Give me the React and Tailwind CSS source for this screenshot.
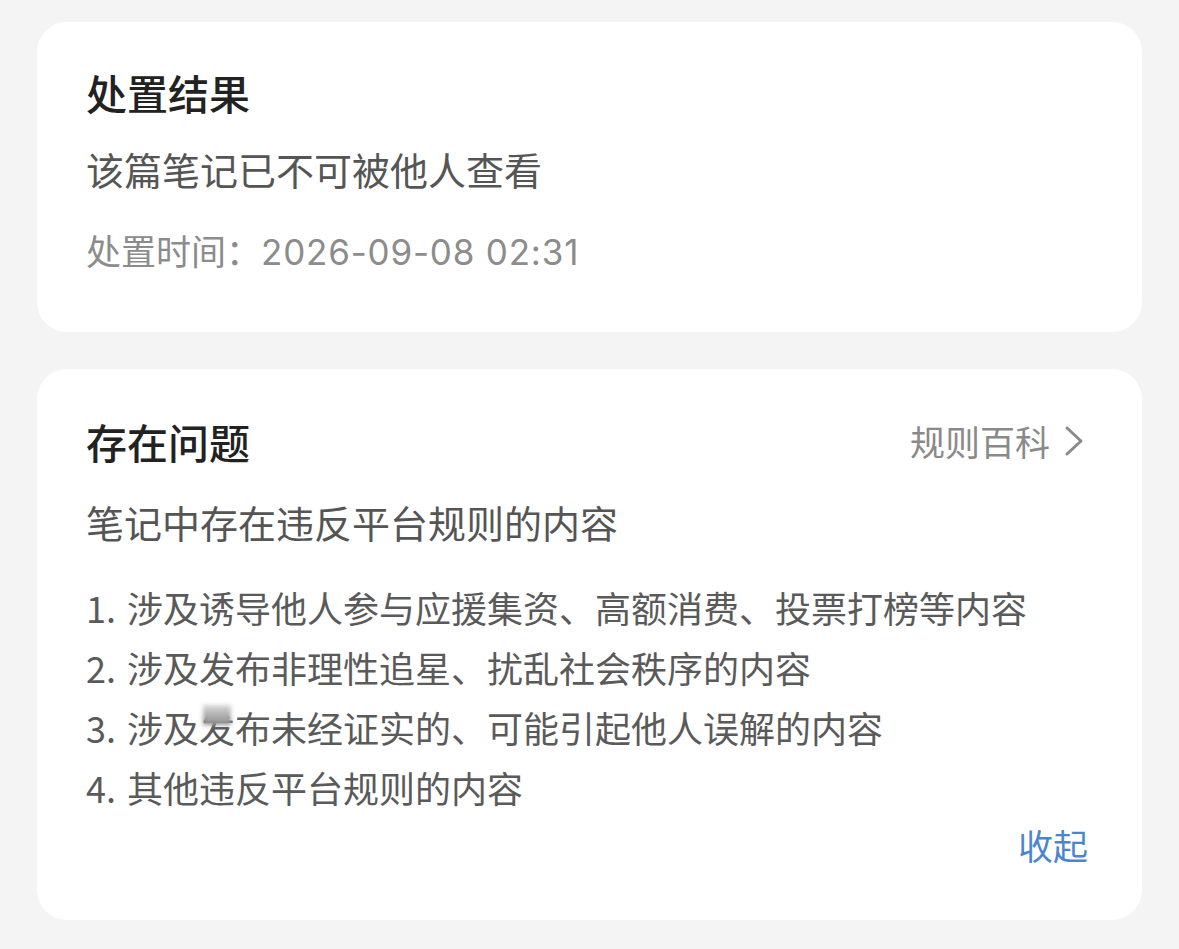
import React from 'react';

const font = { fontFamily: '"Noto Sans CJK SC", "Noto Sans", sans-serif' };
const digits = { fontFamily: 'Inter, "Noto Sans CJK SC", sans-serif' };

const problems = [
    '涉及诱导他人参与应援集资、高额消费、投票打榜等内容',
    '涉及发布非理性追星、扰乱社会秩序的内容',
    null,
    '其他违反平台规则的内容',
];

const ChevronRight = () => (
    <svg width="22" height="32" viewBox="0 0 22 32" fill="none">
        <path d="M5 3 L19 16 L5 29" stroke="#8a8a8a" strokeWidth="3" strokeLinecap="round" strokeLinejoin="round" />
    </svg>
);

const App = () => {
    return (
        <div className="min-h-[949px] w-full bg-[#f4f4f4] px-[37px] pt-[22px]" style={font}>
            {/* result card */}
            <section className="rounded-[30px] bg-white pl-[49px] pr-[56px] pt-[42px] pb-[55px]">
                <h2 className="text-[41px] leading-[56px] font-medium text-[#222222]">处置结果</h2>
                <p className="mt-[23px] text-[38px] leading-[52px] text-[#555555]">该篇笔记已不可被他人查看</p>
                <p className="mt-[30px] text-[35px] leading-[50px] text-[#8c8c8c]">
                    处置时间：<span className="tracking-[0.8px]" style={digits}>2026-09-08 02:31</span>
                </p>
            </section>

            {/* problems card */}
            <section className="mt-[37px] rounded-[30px] bg-white pl-[49px] pr-[58px] pt-[44px] pb-[50px]">
                <div className="flex items-center justify-between">
                    <h2 className="text-[41px] leading-[56px] font-medium text-[#222222]">存在问题</h2>
                    <button className="flex items-center gap-[12px] text-[35px] leading-[50px] text-[#8a8a8a]">
                        规则百科
                        <ChevronRight />
                    </button>
                </div>
                <p className="mt-[27px] text-[38px] leading-[52px] text-[#555555]">笔记中存在违反平台规则的内容</p>
                <ol className="mt-[29px] text-[36px] leading-[60px] text-[#5a5a5a]">
                    {problems.map((text, i) => (
                        <li key={i} className="flex">
                            <span className="w-[41px] shrink-0">{i + 1}.</span>
                            {text ? (
                                <span>{text}</span>
                            ) : (
                                <span>
                                    涉及
                                    <span className="relative">
                                        发
                                        <span className="absolute left-[4px] top-[4px] h-[20px] w-[28px] bg-gradient-to-b from-[#d8d8d8] to-[#8c8c8c] blur-[2px]" />
                                    </span>
                                    布未经证实的、可能引起他人误解的内容
                                </span>
                            )}
                        </li>
                    ))}
                </ol>
                <div className="-mr-[4px] mt-[3px] flex justify-end">
                    <button className="text-[35px] leading-[50px] text-[#4a86d0]">收起</button>
                </div>
            </section>
        </div>
    );
};

export default App;
